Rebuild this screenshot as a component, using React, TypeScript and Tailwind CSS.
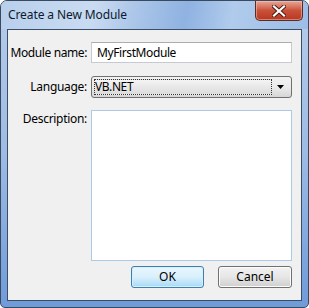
import React from "react";

export default function App() {
  const font = { fontFamily: '"Segoe UI", "Noto Sans", "Liberation Sans", sans-serif' };
  return (
    <div className="w-[309px] h-[308px] bg-white" style={font}>
      <div className="w-[309px] h-[308px] flex flex-col border border-[#3a4a5e] rounded-t-[7px] rounded-b-[5px] bg-gradient-to-b from-[#b6cdea] via-[#9dbbe4] to-[#6f9bd9] px-[6px] pb-[6px] overflow-hidden">
        {/* Title bar */}
        <div className="h-[28px] flex items-start justify-between bg-[linear-gradient(100deg,#b8cfec_0%,#c9dbf1_30%,#a9c4e8_45%,#8fb2e2_60%,#b0cbec_75%,#9cbde6_100%)] -mx-[6px] px-[6px]">
          <div className="pt-[5px] pl-[1px] text-[12px] text-[#0c1a2e] tracking-[-0.1px]">Create a New Module</div>
          <div className="w-[48px] h-[20px] mr-[-1px] rounded-b-[5px] border border-t-0 border-[#5a2a24] bg-gradient-to-b from-[#e8a796] via-[#c9513a] to-[#b8371f] flex items-center justify-center shadow-[inset_0_0_0_1px_rgba(255,200,190,0.5)]">
            <svg width="14" height="12" viewBox="0 0 14 12">
              <path d="M2 1.5 L12 10.5 M12 1.5 L2 10.5" stroke="#4a1a12" strokeWidth="4" strokeLinecap="square" />
              <path d="M2 1.5 L12 10.5 M12 1.5 L2 10.5" stroke="#ffffff" strokeWidth="2.2" strokeLinecap="square" />
            </svg>
          </div>
        </div>
        {/* Client area */}
        <div className="flex-1 border border-[#3c4d66] bg-[#f0f0f0] pt-[12px] pr-[9px] pb-[11px] flex flex-col text-[12px] text-black">
          <div className="grid grid-cols-[79px_1fr] gap-x-[4px] items-center">
            <div className="text-right whitespace-nowrap tracking-[-0.4px]">Module name:</div>
            <div className="h-[21px] border border-[#c7cbd1] border-t-[#abadb3] bg-white px-[5px] flex items-center tracking-[-0.4px]">MyFirstModule</div>
          </div>
          <div className="grid grid-cols-[79px_1fr] gap-x-[4px] items-center mt-[13px]">
            <div className="text-right whitespace-nowrap tracking-[-0.3px]">Language:</div>
            <div className="h-[22px] rounded-[3px] border border-[#707070] bg-gradient-to-b from-[#f2f2f2] via-[#ebebeb] to-[#d6d6d6] flex items-center p-[2px]">
              <div className="flex-1 h-full border border-dotted border-[#333] flex items-center bg-gradient-to-b from-[#f4f4f4] to-[#dcdcdc] tracking-[-0.4px]">VB.NET</div>
              <div className="w-[17px] flex justify-center">
                <svg width="7" height="4" viewBox="0 0 7 4"><path d="M0 0 H7 L3.5 4 Z" fill="#000" /></svg>
              </div>
            </div>
          </div>
          <div className="grid grid-cols-[79px_1fr] gap-x-[4px] items-start mt-[12px]">
            <div className="text-right whitespace-nowrap tracking-[-0.3px]">Description:</div>
            <div className="h-[151px] border border-[#a9cbe8] bg-white" />
          </div>
          <div className="flex justify-end gap-[14px] mt-[5px]">
            <button className="w-[73px] h-[22px] rounded-[3px] border border-[#3c7fb1] bg-gradient-to-b from-[#eaf6fd] via-[#d9f0fc] to-[#a7d9f5] shadow-[inset_0_0_0_1px_#d6eef9] text-[12px]">OK</button>
            <button className="w-[74px] h-[22px] rounded-[3px] border border-[#707070] bg-gradient-to-b from-[#f2f2f2] via-[#e6e6e6] to-[#cfcfcf] shadow-[inset_0_0_0_1px_#fcfcfc] text-[12px]">Cancel</button>
          </div>
        </div>
      </div>
    </div>
  );
}
